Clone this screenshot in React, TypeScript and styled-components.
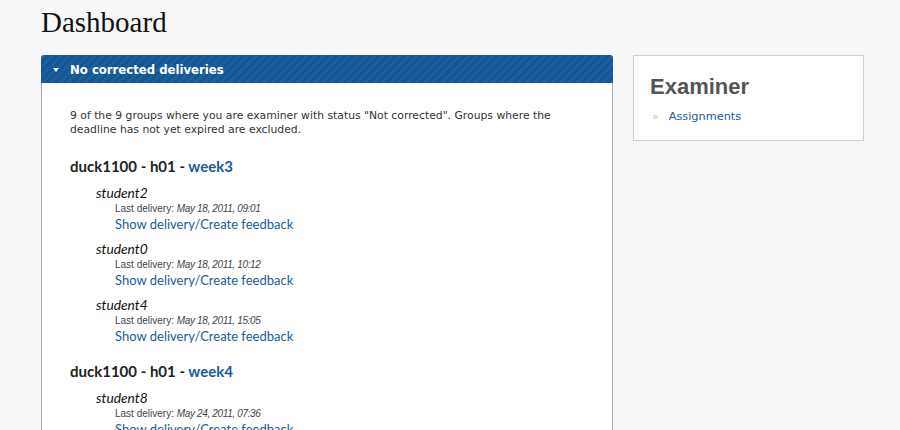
import React from "react";
import styled, { createGlobalStyle } from "styled-components";

const Global = createGlobalStyle`
  html, body { margin: 0; padding: 0; background: #f7f7f7; }
  body { font-family: "DejaVu Sans", Verdana, sans-serif; color: #333; }
`;

const Page = styled.div`
  padding: 0 37px 0 41px;
`;

const Title = styled.h1`
  margin: 0;
  padding-top: 4px;
  height: 51px;
  font-family: "Liberation Serif", "Times New Roman", serif;
  font-weight: normal;
  font-size: 29px;
  line-height: 36px;
  color: #111;
`;

const Columns = styled.div`
  display: flex;
  align-items: flex-start;
  gap: 20px;
`;

const Main = styled.section`
  width: 572px;
  flex: none;
`;

const Header = styled.div`
  height: 28px;
  box-sizing: border-box;
  display: flex;
  align-items: center;
  gap: 11px;
  padding-left: 12px;
  border-radius: 3px 3px 0 0;
  background: repeating-linear-gradient(
    -45deg,
    #1b5fa3 0px,
    #1b5fa3 3px,
    #17558f 3px,
    #17558f 6px
  );
  color: #fff;
  font-family: "DejaVu Sans", Verdana, sans-serif;
  font-weight: bold;
  font-size: 11.7px;
  padding-top: 1px;
`;

const Caret = styled.span`
  width: 0;
  height: 0;
  border-left: 3.5px solid transparent;
  border-right: 3.5px solid transparent;
  border-top: 4px solid #fff;
`;

const Body = styled.div`
  background: #fff;
  border-left: 1px solid #a8a8a8;
  border-right: 1px solid #a8a8a8;
  padding: 26px 28px 0 28px;
  height: 400px;
`;

const Intro = styled.p`
  margin: 0 0 19px 0;
  font-size: 10.8px;
  line-height: 14px;
  color: #333;
`;

const GroupTitle = styled.h3`
  margin: 0 0 8px 0;
  font-family: Lato, "Liberation Sans", sans-serif;
  font-weight: bold;
  font-size: 15px;
  line-height: 20px;
  color: #222;
`;

const Link = styled.a`
  color: #1d5a9c;
  text-decoration: none;
`;

const Student = styled.div`
  padding-left: 26px;
  margin-bottom: 8px;
`;

const StudentName = styled.div`
  font-family: Lato, "Liberation Sans", sans-serif;
  font-style: italic;
  font-size: 13.8px;
  line-height: 17px;
  color: #111;
`;

const Details = styled.div`
  padding-left: 19px;
`;

const Last = styled.div`
  font-family: "Liberation Sans", Arial, sans-serif;
  font-size: 10px;
  line-height: 16px;
  color: #444;
  em { font-style: italic; letter-spacing: -0.35px; }
`;

const Action = styled(Link)`
  display: block;
  font-family: Lato, "Liberation Sans", sans-serif;
  font-size: 13px;
  line-height: 15px;
`;

const Group = styled.div`
  margin-bottom: 17px;
`;

const Side = styled.aside`
  width: 231px;
  flex: none;
  box-sizing: border-box;
  background: #fff;
  border: 1px solid #cfcfcf;
  padding: 17px 16px 15px 16px;
`;

const SideTitle = styled.h2`
  margin: 0 0 8px 0;
  font-family: "Liberation Sans", Arial, sans-serif;
  font-weight: bold;
  font-size: 22px;
  line-height: 28px;
  color: #555;
`;

const SideItem = styled.div`
  display: flex;
  align-items: center;
  gap: 10px;
  padding-left: 2px;
  font-family: "DejaVu Sans", Verdana, sans-serif;
  font-size: 11.3px;
  line-height: 16px;
`;

const Chevron = styled.span`
  color: #c4c4c4;
  font-size: 11px;
`;

const groups = [
  {
    title: "duck1100 - h01 - ",
    link: "week3",
    students: [
      ["student2", "May 18, 2011, 09:01"],
      ["student0", "May 18, 2011, 10:12"],
      ["student4", "May 18, 2011, 15:05"],
    ],
  },
  {
    title: "duck1100 - h01 - ",
    link: "week4",
    students: [["student8", "May 24, 2011, 07:36"]],
  },
];

export default function App() {
  return (
    <>
      <Global />
      <Page>
        <Title>Dashboard</Title>
        <Columns>
          <Main>
            <Header>
              <Caret />
              No corrected deliveries
            </Header>
            <Body>
              <Intro>
                9 of the 9 groups where you are examiner with status "Not corrected". Groups where the
                deadline has not yet expired are excluded.
              </Intro>
              {groups.map((g) => (
                <Group key={g.link}>
                  <GroupTitle>
                    {g.title}
                    <Link href="#">{g.link}</Link>
                  </GroupTitle>
                  {g.students.map(([name, date]) => (
                    <Student key={name}>
                      <StudentName>{name}</StudentName>
                      <Details>
                        <Last>
                          Last delivery: <em>{date}</em>
                        </Last>
                        <Action href="#">Show delivery/Create feedback</Action>
                      </Details>
                    </Student>
                  ))}
                </Group>
              ))}
            </Body>
          </Main>
          <Side>
            <SideTitle>Examiner</SideTitle>
            <SideItem>
              <Chevron>»</Chevron>
              <Link href="#">Assignments</Link>
            </SideItem>
          </Side>
        </Columns>
      </Page>
    </>
  );
}
